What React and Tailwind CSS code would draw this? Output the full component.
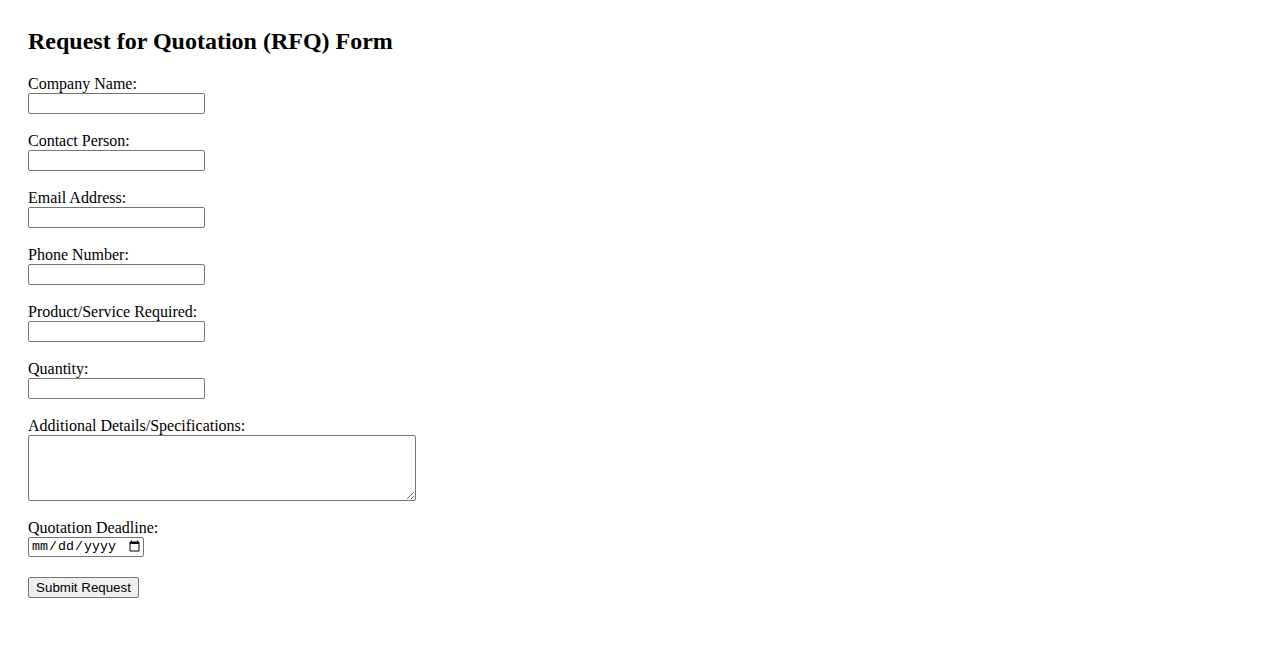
import React from "react";

const fields = [
  { label: "Company Name:", name: "company", type: "text" },
  { label: "Contact Person:", name: "contact", type: "text" },
  { label: "Email Address:", name: "email", type: "email" },
  { label: "Phone Number:", name: "phone", type: "tel" },
  { label: "Product/Service Required:", name: "product", type: "text" },
  { label: "Quantity:", name: "quantity", type: "number" },
];

const inputCls =
  "block w-[177px] h-[21px] border border-[#767676] rounded-[2px] bg-white px-[2px] text-[13.33px] font-['Liberation_Sans',Arial,sans-serif]";

export default function App() {
  return (
    <div className="min-h-screen bg-white text-black font-['Liberation_Serif','Times_New_Roman',serif] px-[28px] pt-[28px]">
      <h2 className="text-[24px] font-bold leading-[26px] mb-[21px]">
        Request for Quotation (RFQ) Form
      </h2>

      <form className="flex flex-col text-[16px]" onSubmit={(e) => e.preventDefault()}>
        {fields.map((f) => (
          <div key={f.name} className="flex flex-col mb-[18px]">
            <label htmlFor={f.name} className="leading-[18px]">{f.label}</label>
            <input id={f.name} name={f.name} type={f.type} className={inputCls} />
          </div>
        ))}

        {/* DETAILS */}
        <div className="flex flex-col mb-[17px]">
          <label htmlFor="details" className="leading-[18px]">
            Additional Details/Specifications:
          </label>
          <textarea
            id="details"
            name="details"
            className="block w-[388px] h-[66px] border border-[#767676] rounded-[2px] bg-white px-[2px] text-[13.33px] font-['Liberation_Mono',monospace]"
          />
        </div>

        {/* DEADLINE */}
        <div className="flex flex-col mb-[18px]">
          <label htmlFor="deadline" className="leading-[19px]">Quotation Deadline:</label>
          <input
            id="deadline"
            name="deadline"
            type="date"
            className="block w-[116px] h-[20px] border border-[#767676] rounded-[2px] bg-white pl-[2px] text-[13.33px] leading-[16px] font-['Liberation_Mono',monospace]"
          />
        </div>

        <div>
          <button
            type="submit"
            className="w-[111px] h-[21px] border border-[#767676] rounded-[2px] bg-[#efefef] text-center text-[13.33px] leading-[15px] font-['Liberation_Sans',Arial,sans-serif]"
          >
            Submit Request
          </button>
        </div>
      </form>
    </div>
  );
}
